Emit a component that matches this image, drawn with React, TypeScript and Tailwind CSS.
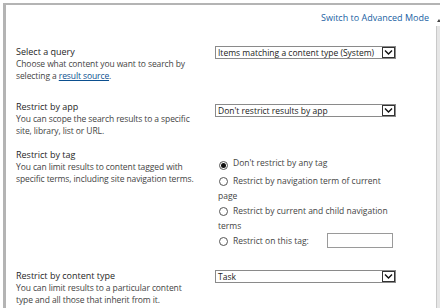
import React from 'react';

const Chevron = () => (
  <svg width="9" height="7" viewBox="0 0 9 7" className="block">
    <polyline points="1,1.5 4.5,5 8,1.5" fill="none" stroke="#111" strokeWidth="1.4" />
  </svg>
);

const Select = ({ value }: { value: string }) => (
  <div className="flex h-[13px] w-[181px] items-stretch border border-[#8a8a8a] bg-white">
    <span className="flex-1 truncate pl-[2px] text-[8.5px] leading-[11px] text-[#222]">{value}</span>
    <span className="flex w-[13px] items-center justify-center border border-[#333] bg-white">
      <Chevron />
    </span>
  </div>
);

const Radio = ({ checked = false }: { checked?: boolean }) => (
  <span className="mr-[5px] inline-flex h-[9px] w-[9px] translate-y-[1px] items-center justify-center rounded-full border border-[#555] bg-white align-[-1px]">
    {checked && <span className="h-[5px] w-[5px] rounded-full bg-[#111]" />}
  </span>
);

const Section = ({
  title,
  children,
  right,
  className = '',
}: {
  title: string;
  children: React.ReactNode;
  right: React.ReactNode;
  className?: string;
}) => (
  <div className={`flex ${className}`}>
    <div className="w-[199px] shrink-0">
      <div className="text-[9px] leading-[12px] text-[#262626]">{title}</div>
      <div className="text-[8.5px] leading-[12px] tracking-[-0.1px] text-[#444]">{children}</div>
    </div>
    <div className="w-[181px]">{right}</div>
  </div>
);

export default function App() {
  return (
    <div className="h-[308px] w-[440px] overflow-hidden bg-white pl-[3px] pt-[3px] font-['Open_Sans',sans-serif]">
      <div className="flex h-full border-l-[3px] border-t-2 border-[#b4b4b4]">
        <div className="flex-1 pl-[10px]">
          <div className="flex justify-end pr-[7px] pt-[7px] text-[9px] leading-[12px] text-[#1a5fa3]">
            Switch to Advanced Mode
          </div>

          <Section
            className="mt-[22px]"
            title="Select a query"
            right={<Select value="Items matching a content type (System)" />}
          >
            Choose what content you want to search by
            <br />
            selecting a{' '}
            <span className="text-[#0b4f8f] underline">result source</span>.
          </Section>

          <Section
            className="mt-[19px]"
            title="Restrict by app"
            right={
              <div className="pt-[3px]">
                <Select value="Don't restrict results by app" />
              </div>
            }
          >
            You can scope the search results to a specific
            <br />
            site, library, list or URL.
          </Section>

          <Section
            className="mt-[12px]"
            title="Restrict by tag"
            right={
              <div className="ml-[3px] pt-[6px] text-[8.5px] leading-[15px] text-[#444]">
                <div className="mb-[3px] pl-[1px]">
                  <Radio checked />
                  Don&apos;t restrict by any tag
                </div>
                <div>
                  <span className="pl-[1px]">
                    <Radio />
                  </span>
                  Restrict by navigation term of current
                  <br />
                  page
                </div>
                <div>
                  <span className="pl-[1px]">
                    <Radio />
                  </span>
                  Restrict by current and child navigation
                  <br />
                  terms
                </div>
                <div className="flex items-center pl-[1px]">
                  <Radio />
                  <span>Restrict on this tag:</span>
                  <span className="ml-auto mr-[3px] h-[15px] w-[66px] border border-[#9a9a9a] bg-white" />
                </div>
              </div>
            }
          >
            You can limit results to content tagged with
            <br />
            specific terms, including site navigation terms.
          </Section>

          <Section
            className="mt-[22px]"
            title="Restrict by content type"
            right={<Select value="Task" />}
          >
            You can limit results to a particular content
            <br />
            type and all those that inherit from it.
          </Section>
        </div>

        <div className="flex w-[4px] flex-col">
          <div className="h-[14px]" />
          <div className="ml-[1px] h-0 w-0 border-x-[2px] border-b-[3px] border-x-transparent border-b-[#444]" />
          <div className="mt-[4px] flex-1 border-l border-[#c9c9c9] bg-[#e6e6e6]" />
        </div>
      </div>
    </div>
  );
}
